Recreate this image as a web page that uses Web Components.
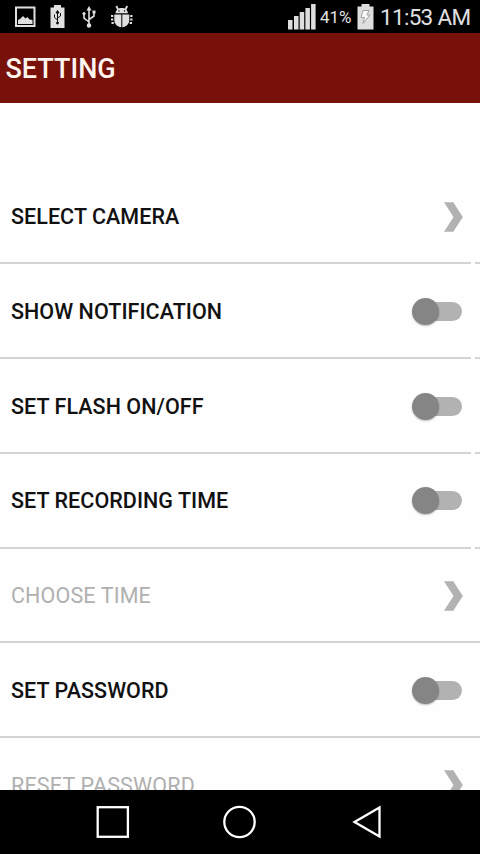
<!DOCTYPE html>
<html lang="en">
<head>
<meta charset="utf-8">
<title>Setting</title>
<style>
html,body{margin:0;height:100%}
body{font-family:Roboto,"Liberation Sans",sans-serif;background:#fefefe;overflow:hidden}
</style>
</head>
<body>
<settings-screen></settings-screen>
<script>
const define = (name, html, setup) => {
  const t = document.createElement('template');
  t.innerHTML = html;
  customElements.define(name, class extends HTMLElement {
    connectedCallback() {
      if (this.shadowRoot) return;
      this.attachShadow({mode: 'open'}).append(t.content.cloneNode(true));
      if (setup) setup(this);
    }
  });
};

define('status-bar', `
<style>
:host{display:flex;align-items:center;justify-content:space-between;height:33px;background:#000;color:#e0e0e0;box-sizing:border-box}
svg{display:block;flex:none}
.right{display:flex;align-items:center;height:33px;padding-right:10px}
.pct{font-size:17px;line-height:33px;width:32px;margin:2px 5px 0 4px;white-space:nowrap}
.time{font-size:22.500px;letter-spacing:-.7px;line-height:33px;width:90px;margin:2px 0 0 6px;white-space:nowrap}
</style>
<svg width="140" height="33" viewBox="0 0 140 33" fill="#e0e0e0">
  <path fill-rule="evenodd" d="M15 6.500h20.500v20.500h-20.500zM17 8.500v16.500h16.500v-16.500z"/>
  <path d="M18 24v-4l2-1 3-3 2.500 2.500 2-1.500 2 2.500 3 .5v4z"/>
  <path d="M50.500 7.500h3.500v-2.500h7v2.500h3.500v20.500h-14z"/>
  <g stroke="#111" fill="none" stroke-width="1"><path d="M57.500 12v11M57.500 20l-3-2.500v-3M57.500 18l3-2v-3"/><path d="M56 13l1.500-2.500 1.500 2.500z" fill="#111"/><circle cx="57.500" cy="23" r="1" fill="#111"/></g>
  <g stroke="#e0e0e0" fill="none" stroke-width="1.600"><path d="M89 9v16M89 22l-5-4v-4M89 19.500l5-3.500v-4"/></g>
  <path d="M86.500 10.500l2.500-4.500 2.500 4.500z"/><circle cx="89" cy="25.500" r="2.200"/><circle cx="84" cy="13.500" r="1.600"/><path d="M92.500 10.500h3v3h-3z"/>
  <path d="M115.500 13.300c.3-3.300 2.700-5.300 6.200-5.300s5.900 2 6.200 5.300zM114.300 14.500h7v12.800c-4-.5-7-3.500-7-7zM122.300 14.500h7v5.800c0 3.500-3 6.500-7 7z"/>
  <path d="M118 9.500l-1.700-3.500M125.500 9.500l1.700-3.500" stroke="#e0e0e0" stroke-width="1.800"/>
  <path d="M111 15h2.300v2h-2.300zM111 18.500h2.300v2h-2.300zM111.500 22h2.300v2h-2.300zM130.200 15h2.300v2h-2.300zM130.200 18.500h2.300v2h-2.300zM129.700 22h2.300v2h-2.300z"/>
  <circle cx="119" cy="11" r=".7" fill="#000"/><circle cx="124.500" cy="11" r=".7" fill="#000"/>
</svg>
<div class="right">
  <svg width="28" height="33" viewBox="0 0 28 33" fill="#dedede"><path d="M0 20h4.500v9.500h-4.500zM6 16h4.500v13.500h-4.500zM11.700 12h4.500v17.500h-4.500zM17.400 8h4.500v21.500h-4.500zM23.100 4h4.500v25.500h-4.500z"/></svg>
  <div class="pct">41%</div>
  <svg width="17" height="33" viewBox="0 0 17 33"><path fill="#dedede" d="M.5 6.500h4v-2.500h8v2.500h4v23h-16z"/><path fill="#f8f8f8" stroke="#999" stroke-width=".9" d="M6 10.500h6l-2 4.500h3l-7 8.500 1.500-6h-3.500z"/></svg>
  <div class="time">11:53 AM</div>
</div>`);

define('title-bar', `
<style>
:host{display:flex;align-items:center;height:69.500px;background:#77110a;color:#fff4ee;box-sizing:border-box;padding:3px 0 0 5.500px;font-size:27px;font-weight:500}
</style><span><slot></slot></span>`);

define('chevron-icon', `
<style>:host{display:block;flex:none;width:19px;height:30px;margin-right:17px}svg{display:block}</style>
<svg width="19" height="30" viewBox="0 0 19 30"><path fill="#b2b2b2" d="M0 .3h9.300l9.500 14.700-9.500 14.700h-9.300l9.500-14.700z"/></svg>`);

define('toggle-switch', `
<style>
:host{display:flex;align-items:center;flex:none;width:50px;height:28px;margin-right:18px}
.thumb{flex:none;width:27px;height:27px;border-radius:50%;background:#858585;box-shadow:0 1px 2px #0004;z-index:1}
.track{flex:none;width:37px;height:19px;margin-left:-14px;border-radius:10px;background:#b2b2b2}
</style><div class="thumb"></div><div class="track"></div>`);

define('setting-row', `
<style>
:host{display:flex;box-sizing:border-box;height:94.750px;flex:none;flex-direction:column;color:#111}
:host([disabled]){color:#b0b0b0}
.body{flex:1;display:flex;align-items:center;justify-content:space-between;padding:1.500px 0 0 11px}
.label{font-size:21.500px;font-weight:500;line-height:28px;padding-top:1px;letter-spacing:.05px;white-space:nowrap}
:host([disabled]) .label{font-weight:400;letter-spacing:.13px}
.line{display:flex;height:2px;gap:4px}
.line i{background:#d3d3d3;flex:1}.line i+i{flex:0 0 5px}
:host([full]) .line{gap:0}
</style>
<div class="body"><span class="label"><slot></slot></span><slot name="end"></slot></div>
<div class="line"><i></i><i></i></div>`);

define('nav-bar', `
<style>:host{display:flex;height:64px;background:#000;justify-content:center}svg{display:block}</style>
<svg width="480" height="64" viewBox="0 0 480 64" fill="none" stroke="#fff" stroke-width="2.300">
<rect x="97.700" y="17.200" width="30.200" height="29.600"/><circle cx="239.500" cy="32" r="15.200"/><path d="M354.500 32l25-14.500v29z"/></svg>`);

define('settings-screen', `
<style>
:host{display:flex;flex-direction:column;height:854px;width:480px;overflow:hidden}
status-bar,title-bar,nav-bar{flex:none}
main{flex:1;min-height:0;overflow:hidden;display:flex;flex-direction:column;padding-top:67px;background:#fefefe;box-sizing:border-box}
.wide{letter-spacing:.2px}
</style>
<status-bar></status-bar>
<title-bar>SETTING</title-bar>
<main>
<setting-row>SELECT CAMERA<chevron-icon slot="end"></chevron-icon></setting-row>
<setting-row>SHOW NOTIFICATION<toggle-switch slot="end"></toggle-switch></setting-row>
<setting-row>SET FLASH ON/OFF<toggle-switch slot="end"></toggle-switch></setting-row>
<setting-row>SET RECORDING TIME<toggle-switch slot="end"></toggle-switch></setting-row>
<setting-row full disabled>CHOOSE TIME<chevron-icon slot="end"></chevron-icon></setting-row>
<setting-row full>SET PASSWORD<toggle-switch slot="end"></toggle-switch></setting-row>
<setting-row full disabled><span class="wide">RESET PASSWORD</span><chevron-icon slot="end"></chevron-icon></setting-row>
</main>
<nav-bar></nav-bar>`);
</script>
</body>
</html>
